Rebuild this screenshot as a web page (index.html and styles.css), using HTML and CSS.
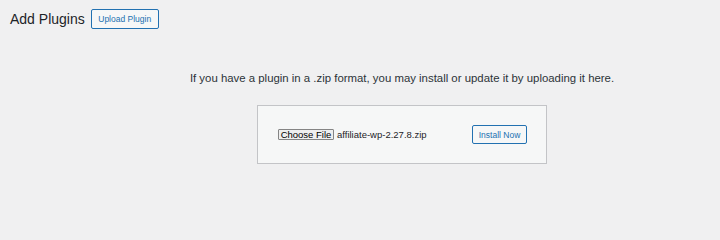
FILE: index.html
```html
<!DOCTYPE html>
<html>
<head>
<meta charset="utf-8">
<link rel="stylesheet" href="styles.css">
</head>
<body>
<div class="wrap">
  <div class="header">
    <h1 class="title">Add Plugins</h1>
    <a class="btn" href="#">Upload Plugin</a>
  </div>
  <div class="upload">
    <p class="desc">If you have a plugin in a .zip format, you may install or update it by uploading it here.</p>
    <form class="panel">
      <div class="file">
        <span class="choose">Choose File</span>
        <span class="fname">affiliate-wp-2.27.8.zip</span>
      </div>
      <span class="btn install">Install Now</span>
    </form>
  </div>
</div>
</body>
</html>
```
FILE: styles.css
```css
html, body {
  margin: 0;
  padding: 0;
  background: #f0f0f1;
}
body {
  font-family: "Liberation Sans", Arial, sans-serif;
  color: #1d2327;
  width: 720px;
  height: 211px;
  overflow: hidden;
}
.header {
  display: flex;
  align-items: center;
  padding: 9px 0 0 10px;
  height: 20px;
}
.title {
  margin: 0;
  font-size: 14px;
  font-weight: 400;
  color: #1d2327;
  line-height: 20px;
}
.btn {
  display: inline-flex;
  align-items: center;
  justify-content: center;
  box-sizing: border-box;
  height: 20px;
  padding: 0 6px;
  border: 1px solid #2271b1;
  border-radius: 2px;
  background: #f6f7f7;
  color: #2271b1;
  font-size: 8.5px;
  white-space: nowrap;
  text-decoration: none;
}
.header .btn {
  margin-left: 6px;
  width: 68px;
}
.upload {
  padding-left: 84px;
  text-align: center;
}
.desc {
  margin: 41px 0 0;
  font-size: 11.4px;
  line-height: 16px;
  color: #2c3338;
}
.panel {
  display: inline-flex;
  align-items: center;
  justify-content: space-between;
  box-sizing: border-box;
  width: 290px;
  height: 59px;
  margin-top: 19px;
  padding: 0 19px 0 20px;
  background: #f6f7f7;
  border: 1px solid #c3c4c7;
}
.file {
  display: flex;
  align-items: center;
  gap: 3px;
}
.choose {
  box-sizing: border-box;
  height: 11px;
  width: 56px;
  display: inline-flex;
  align-items: center;
  justify-content: center;
  background: #efefef;
  border: 1px solid #858585;
  border-radius: 1px;
  font-size: 9.5px;
  color: #000;
}
.fname {
  font-size: 9.5px;
  color: #1d2327;
}
.install {
  width: 55px;
  height: 19px;
  padding: 0;
}
```
